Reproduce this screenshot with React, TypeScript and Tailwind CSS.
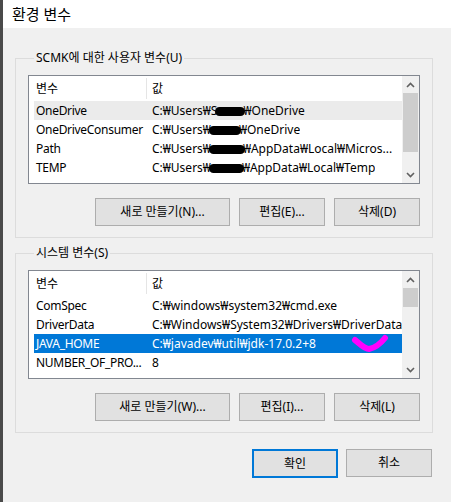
import React from "react";

const font = {
  fontFamily: '"Noto Sans", "Noto Sans CJK KR", sans-serif',
};

function Blob({ w }: { w: number }) {
  return (
    <span
      className="mx-[-2px] inline-block h-[9px] rounded-full bg-black align-middle"
      style={{ width: w }}
    />
  );
}

function ScrollBar({ thumb }: { thumb: number }) {
  return (
    <div className="flex w-[17px] shrink-0 flex-col bg-[#f0f0f0]">
      <div className="flex h-[17px] items-center justify-center">
        <svg width="9" height="6" viewBox="0 0 9 6">
          <path d="M1 5 L4.5 1.5 L8 5" fill="none" stroke="#606060" strokeWidth="1.6" />
        </svg>
      </div>
      <div className="flex-1">
        <div className="mx-[1px] bg-[#cdcdcd]" style={{ height: thumb }} />
      </div>
      <div className="flex h-[17px] items-center justify-center">
        <svg width="9" height="6" viewBox="0 0 9 6">
          <path d="M1 1 L4.5 4.5 L8 1" fill="none" stroke="#606060" strokeWidth="1.6" />
        </svg>
      </div>
    </div>
  );
}

type Row = { name: string; value: React.ReactNode; state?: "hover" | "selected" };

function VarList({ rows, thumb }: { rows: Row[]; thumb: number }) {
  return (
    <div className="flex h-[109px] w-[392px] overflow-hidden border border-[#828790] bg-white">
      <div className="flex min-w-0 flex-1 flex-col overflow-hidden">
        <div className="flex h-[25px] shrink-0 items-center pl-[5px] text-[12px] text-black">
          <div className="w-[112px] pl-[2px]">변수</div>
          <div className="h-[21px] w-px bg-[#e5e5e5]" />
          <div className="pl-[5px]">값</div>
        </div>
        {rows.map((r) => (
          <div
            key={r.name}
            className={
              "ml-[5px] flex h-[19px] shrink-0 items-center text-[12px] " +
              (r.state === "selected"
                ? "bg-[#0078d7] text-white"
                : r.state === "hover"
                ? "bg-[#ebebeb] text-black"
                : "text-black")
            }
          >
            <div className="w-[112px] shrink-0 overflow-hidden whitespace-nowrap pl-[2px] tracking-[-0.3px]">
              {r.name}
            </div>
            <div className="overflow-hidden whitespace-nowrap pl-[6px]">{r.value}</div>
          </div>
        ))}
      </div>
      <ScrollBar thumb={thumb} />
    </div>
  );
}

function Btn({ children, w, primary }: { children: React.ReactNode; w: number; primary?: boolean }) {
  return (
    <button
      className={
        "flex items-center justify-center bg-[#e1e1e1] text-[12px] text-black " +
        (primary ? "h-[29px] border-2 border-[#0078d7]" : "h-[28px] border border-[#adadad]")
      }
      style={{ width: w }}
    >
      {children}
    </button>
  );
}

function Group({ label, children }: { label: string; children: React.ReactNode }) {
  return (
    <fieldset className="w-[418px] border border-[#dcdcdc] pb-[11px] pl-[12px]">
      <legend className="ml-[6px] px-[2px] text-[12px] leading-[16px] text-black">{label}</legend>
      {children}
    </fieldset>
  );
}

export default function App() {
  const userRows: Row[] = [
    {
      name: "OneDrive",
      state: "hover",
      value: (
        <>
          C:₩Users₩S<Blob w={30} />₩OneDrive
        </>
      ),
    },
    {
      name: "OneDriveConsumer",
      value: (
        <>
          C:₩Users₩<Blob w={32} />₩OneDrive
        </>
      ),
    },
    {
      name: "Path",
      value: (
        <>
          C:₩Users₩<Blob w={36} />₩AppData₩Local₩Micros...
        </>
      ),
    },
    {
      name: "TEMP",
      value: (
        <>
          C:₩Users₩<Blob w={35} />₩AppData₩Local₩Temp
        </>
      ),
    },
  ];

  const sysRows: Row[] = [
    { name: "ComSpec", value: "C:₩windows₩system32₩cmd.exe" },
    { name: "DriverData", value: "C:₩Windows₩System32₩Drivers₩DriverData" },
    { name: "JAVA_HOME", value: "C:₩javadev₩util₩jdk-17.0.2+8", state: "selected" },
    { name: "NUMBER_OF_PRO...", value: "8" },
  ];

  return (
    <div className="flex h-[502px] w-[451px] overflow-hidden bg-[#f0f0f0]" style={font}>
      <div className="w-[3px] shrink-0 bg-[#4a4a4a]" />
      <div className="flex flex-1 flex-col">
        <div className="flex h-[28px] items-center bg-white pl-[9px] text-[15px] text-black">
          환경 변수
        </div>
        <div className="relative flex flex-col pl-[12px] pt-[22px]">
          <Group label="SCMK에 대한 사용자 변수(U)">
            <div className="mt-[9px]">
              <VarList rows={userRows} thumb={59} />
            </div>
            <div className="mt-[14px] flex gap-[9px] pl-[67px]">
              <Btn w={135}>새로 만들기(N)...</Btn>
              <Btn w={86}>편집(E)...</Btn>
              <Btn w={86}>삭제(D)</Btn>
            </div>
          </Group>
          <div className="mt-[7px]">
            <Group label="시스템 변수(S)">
              <div className="mt-[9px]">
                <VarList rows={sysRows} thumb={19} />
              </div>
              <div className="mt-[14px] flex gap-[9px] pl-[67px]">
                <Btn w={135}>새로 만들기(W)...</Btn>
                <Btn w={86}>편집(I)...</Btn>
                <Btn w={86}>삭제(L)</Btn>
              </div>
            </Group>
          </div>
          <div className="mt-[16px] flex w-[418px] justify-end gap-[8px] pr-[1px]">
            <Btn w={86} primary>
              확인
            </Btn>
            <Btn w={86}>취소</Btn>
          </div>
          <svg
            className="pointer-events-none absolute left-[340px] top-[305px]"
            width="50"
            height="22"
            viewBox="0 0 50 22"
          >
            <path
              d="M12 7 C16 10 21 16 26 16 C32 15 38 10 42 5"
              fill="none"
              stroke="#ff00ff"
              strokeWidth="6"
              strokeLinecap="round"
            />
          </svg>
        </div>
      </div>
    </div>
  );
}
